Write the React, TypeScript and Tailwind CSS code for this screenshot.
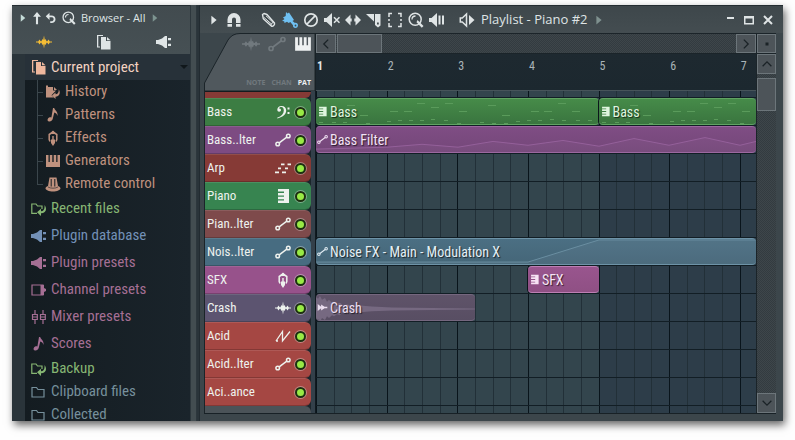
import { useState } from 'react'
import type { ReactNode } from 'react'

function cx(...classes: Array<string | false | null | undefined>) {
  return classes.filter(Boolean).join(' ')
}

type IconName =
  | 'wave' | 'pages' | 'plug' | 'history' | 'note' | 'effects' | 'keys' | 'knob' | 'folderReturn'
  | 'channel' | 'mixer' | 'folder' | 'automation' | 'clef' | 'steps' | 'keysSide' | 'zigzag'
  | 'arrowUp' | 'undo' | 'search' | 'triangle' | 'magnet' | 'pencil' | 'brush' | 'forbid' | 'mute'
  | 'slip' | 'slice' | 'select' | 'scrub' | 'speaker' | 'minimize' | 'maximize' | 'close'
  | 'chevronLeft' | 'chevronRight' | 'chevronUp' | 'chevronDown' | 'dot' | 'clipAudio'

const stroke = { fill: 'none', stroke: 'currentColor' }

const icons: Record<IconName, ReactNode> = {
  wave: <path d="M0 7.400h2.200L3.500 5.500l1.200 1.700h.8L6.300 5l.9 1L8 1.500 8.800 6l.9-1 .8 2.200h.8l1.200-1.700 1.300 1.900H16v1.200h-2.200l-1.300 1.900-1.200-1.700h-.8L9.700 11l-.9-1L8 14.500 7.200 10l-.9 1-.8-2.200h-.8l-1.200 1.700-1.300-1.900H0z" />,
  pages: (
    <>
      <path d="M1 1h6v1H2.300v10.500H4v1H1z" />
      <path d="M5 3h5v4h4.500v8.500H5z" />
      <path d="M11 3l3.500 3.200H11z" />
    </>
  ),
  plug: (
    <>
      <path d="M0 6h2l4-1.500L9 2h2v12H9l-3-2.500L2 10H0z" />
      <path d="M12 4h3v2.200h-3zM12 9.800h3V12h-3z" />
    </>
  ),
  history: (
    <>
      <path d="M1 1.500h2V3h5v3.500h3l-4.500 4.700L9 13.500H1z" />
      <path d="M9 3l3 3H9z" />
      <path d="M13.800 5.500c2.200 3.500.5 7-3.300 7.200V15L7 11.500 10.500 8.500v1.800c2.300 0 3.300-2 3.300-4.800z" />
    </>
  ),
  note: <path d="M8 1h1.200c.3 2.200 4 3.200 3.300 8-.7-2-1.700-3-3.200-3.400L7.700 12c-.5 1.700-2 2.700-3.500 2.500-1.600-.2-2.100-1.600-1.300-2.800.8-1.100 2.300-1.600 3.500-1.200z" />,
  effects: (
    <>
      <path {...stroke} strokeWidth="1.500" d="M5 11.500L4.200 9.500v-5L8 2l3.800 2.500v5l-.8 2" />
      <path d="M8 .5l3 3H5zM7.300 6h1.400v3.500H10V13l-2 3-2-3V9.500h1.300z" />
    </>
  ),
  keys: <path d="M1 2h2.500v7h1.300V2h2.500v7h1.400V2h2.500v7h1.300V2H15v12H1z" />,
  knob: (
    <>
      <path d="M4.500 1.500h7L13 10c1.500.5 2.500 1.500 2.500 2.500C15.500 14 12 15.500 8 15.500S.5 14 .5 12.500c0-1 1-2 2.500-2.500z" />
      <path d="M6.200 3v7.500M9.800 3v7.500" fill="none" stroke="#151d23" strokeWidth="1" />
      <path d="M3 11c2.500 1.600 7.500 1.600 10 0" fill="none" stroke="#151d23" strokeWidth=".6" />
    </>
  ),
  folderReturn: (
    <>
      <path {...stroke} strokeWidth="1.200" d="M6 12.400H.8V3H5l1.500 2H11v3" />
      <path d="M13.500 4c3 4 1.300 8-3.500 8.200V15l-4-3.700L10 7.800v2.400c2.700 0 4-2.700 3.500-6.200z" />
    </>
  ),
  channel: (
    <>
      <path {...stroke} strokeWidth="1.200" d="M1 3h11v10H1z" />
      <path d="M9.500 3H13v10H9.500zM13 6l2 1v2l-2 1z" />
    </>
  ),
  mixer: <path {...stroke} strokeWidth="1.200" d="M4 1v4.500M4 10.500V15M12 1v4.500M12 10.500V15M1.500 5.500h4.800v5H1.500zM9.500 5.500h4.800v5H9.500zM2 8h4M10 8h4" />,
  folder: <path {...stroke} strokeWidth="1.200" d="M1 13V3.500h4.500l1.500 2h6V13z" />,
  automation: (
    <g {...stroke} strokeWidth="1.500">
      <circle cx="2.700" cy="12" r="1.800" />
      <circle cx="13.300" cy="4" r="1.800" />
      <path d="M4.200 10.900l7.600-5.800" />
    </g>
  ),
  clef: (
    <>
      <path d="M2.300 5.800C2.300 3.500 4 2 6.500 2c3 0 4.700 1.800 4.700 4.500 0 3.700-3 6.300-8.700 8l-.4-.7c4.500-1.700 6.700-4 6.700-7.300C8.800 4.300 8 3 6.300 3 5 3 4 3.600 3.800 4.600c1.300-.3 2.200.4 2.200 1.500s-.8 1.700-1.800 1.700c-1.200 0-1.900-.8-1.900-2z" />
      <path d="M12.500 3.500h2v2h-2zM12.500 8h2v2h-2z" />
    </>
  ),
  steps: <path d="M0 11.500h4v1.700H0zM7 11.500h4v1.700H7zM3 7.500h3v1.700H3zM10 7.500h3v1.700h-3zM6 3.500h3.500v1.700H6zM12.500 3.500H16v1.700h-3.500z" />,
  keysSide: <path d="M3 1h11v14H3v-2.500h6v-1.300H3V8.700h6V7.400H3V4.900h6V3.600H3z" />,
  zigzag: <path {...stroke} strokeWidth="1.300" d="M1 13L7.500 3.500v9.500L15 3.500M1 13h2" />,
  arrowUp: <path d="M8 1l4.500 5.500H9.200V15H6.800V6.500H3.500z" />,
  undo: <path d="M6 1v3.500h2.500c3.500 0 5.500 2 5.500 5s-2 5-5.500 5H7v-2.300h1.300c2 0 3.200-1 3.200-2.700S10.300 7 8.500 7H6v3.500L1 5.800z" />,
  search: (
    <>
      <circle {...stroke} strokeWidth="1.500" cx="7.200" cy="7.200" r="6" />
      <path {...stroke} strokeWidth="1.300" d="M4 7.500C4 5.200 5.200 4 7.500 4" />
      <path d="M9.500 8l6 6-1.700 1.700-5.300-5.500z" />
    </>
  ),
  triangle: <path d="M5 3l6 5-6 5z" />,
  magnet: (
    <>
      <path d="M1.500 11V7.500a6.500 6.500 0 0113 0V11H10V7.500a2 2 0 00-4 0V11z" />
      <path d="M1.500 12H6v2.800H1.500zM10 12h4.500v2.800H10z" />
    </>
  ),
  pencil: (
    <>
      <path {...stroke} strokeWidth="1.400" strokeLinejoin="round" d="M1.500 2.500l.8 4.200 8 7.300c1.700.7 3.700-1.200 3.200-3L6 2.500 3 1.500z" />
      <path {...stroke} strokeWidth="1" d="M3 5.500l8 7M5 3.800l7.500 7M9.300 13l3.700-3.500" />
    </>
  ),
  brush: (
    <>
      <path d="M4 0l1.500 1.500L7 .5l5 7.500-1.500 1L13 11c1.500-.5 3 .5 3 2.300 0 1.500-1 2.700-2.500 2.700-1.700 0-2.700-1-2.500-2.700L8.300 10l-1.600 1L5 9.800 2.500 11l-.3-1.700L0 9l2.500-2L1 5.500 3.700 4z" />
      <circle cx="13.500" cy="13.500" r=".9" fill="#414a4e" />
    </>
  ),
  forbid: (
    <g {...stroke} strokeWidth="1.700">
      <circle cx="8" cy="8" r="6.200" />
      <path d="M3.700 12.300l8.600-8.600" />
    </g>
  ),
  mute: (
    <>
      <path d="M0 6h2.500L8 1v14l-5.500-5H0z" />
      <path {...stroke} strokeWidth="1.600" d="M10 5.200l5.500 5.600M15.500 5.200L10 10.800" />
    </>
  ),
  slip: <path d="M5.500 2.500v4h1.200v3H5.500v4L0 8zM10.500 2.500v4H9.300v3h1.200v4L16 8z" />,
  slice: (
    <>
      <path d="M0 2h8v7.500z" />
      <path d="M9 2h5.500v11.500L12 15.500 9 13z" />
      <path d="M11 10.500h1.800v2H11z" fill="#414a4e" />
    </>
  ),
  select: <path {...stroke} strokeWidth="1.500" d="M5 1.500H2V5M11 1.500h3V5M5 14.500H2V11M11 14.500h3V11M2 7v2M14 7v2" />,
  scrub: (
    <>
      <path d="M0 6h2.500L8 1v14l-5.500-5H0z" />
      <path d="M9.500 3.500h2v9h-2zM13 3.500h2v9h-2z" />
    </>
  ),
  speaker: (
    <>
      <path {...stroke} strokeWidth="1.500" d="M1.300 6h2L7.500 2v12L3.300 10h-2z" />
      <path d="M10 3l5.500 5L10 13z" />
    </>
  ),
  minimize: <path d="M5 5h7v2H5z" />,
  maximize: <path d="M3 4h10v8.500H3zM4.500 6.500V11h7V6.500z" fillRule="evenodd" />,
  close: <path {...stroke} strokeWidth="2" d="M4 4l8 8M12 4l-8 8" />,
  chevronLeft: <path {...stroke} strokeWidth="1.500" d="M10.500 3L5.500 8l5 5" />,
  chevronRight: <path {...stroke} strokeWidth="1.500" d="M5.500 3l5 5-5 5" />,
  chevronUp: <path {...stroke} strokeWidth="1.500" d="M3 10.500l5-5 5 5" />,
  chevronDown: <path {...stroke} strokeWidth="1.500" d="M3 5.500l5 5 5-5" />,
  dot: <path d="M6.500 6.500h3v3h-3z" />,
  clipAudio: <path d="M1 3l5 4V3.500L11 7h4v2h-4l-5 3.500V9l-5 4z" />,
}

function Icon({ name, className = 'size-4' }: { name: IconName; className?: string }) {
  return (
    <svg viewBox="0 0 16 16" fill="currentColor" aria-hidden="true" className={cx('shrink-0', className)}>
      {icons[name]}
    </svg>
  )
}

function IconButton({ name, label, className, size = 'size-4' }: { name: IconName; label: string; className?: string; size?: string }) {
  return (
    <button type="button" aria-label={label} className={cx('flex shrink-0 items-center justify-center', className)}>
      <Icon name={name} className={size} />
    </button>
  )
}

type TreeItem = { label: string; icon: IconName; color: string; compact?: boolean }

const projectItems: TreeItem[] = [
  { label: 'History', icon: 'history', color: 'text-[#bf917e]' },
  { label: 'Patterns', icon: 'note', color: 'text-[#bf917e]' },
  { label: 'Effects', icon: 'effects', color: 'text-[#bf917e]' },
  { label: 'Generators', icon: 'keys', color: 'text-[#bf917e]' },
  { label: 'Remote control', icon: 'knob', color: 'text-[#bf917e]' },
]

const folders: TreeItem[] = [
  { label: 'Recent files', icon: 'folderReturn', color: 'text-[#86b673]' },
  { label: 'Plugin database', icon: 'plug', color: 'text-[#7391b7]' },
  { label: 'Plugin presets', icon: 'plug', color: 'text-[#a56f94]' },
  { label: 'Channel presets', icon: 'channel', color: 'text-[#a56f94]' },
  { label: 'Mixer presets', icon: 'mixer', color: 'text-[#a56f94]' },
  { label: 'Scores', icon: 'note', color: 'text-[#a56f94]' },
  { label: 'Backup', icon: 'folderReturn', color: 'text-[#86b673]', compact: true },
  { label: 'Clipboard files', icon: 'folder', color: 'text-[#76909c]', compact: true },
  { label: 'Collected', icon: 'folder', color: 'text-[#76909c]', compact: true },
]

function Browser() {
  return (
    <aside className="flex w-[178px] shrink-0 flex-col bg-[#2a343a]">
      <header className="border-t border-[#242d32] bg-gradient-to-b from-[#424b4f] to-[#465054] text-[#dfe5e6]">
        <div className="flex h-6 items-center pl-[3px]">
          <IconButton name="triangle" label="Browser menu" size="size-3" className="w-4 text-[#c5dcd8]" />
          <IconButton name="arrowUp" label="Up" size="size-3.5" className="w-3" />
          <IconButton name="undo" label="Back" size="size-3" className="w-4" />
          <IconButton name="search" label="Search" size="size-3.5" className="w-5" />
          <h2 className="pl-0.5 font-['Open_Sans',sans-serif] text-[11px] font-medium">Browser - All</h2>
          <Icon name="triangle" className="ml-1 size-3 text-[#7d9490]" />
        </div>
        <div className="flex h-6 items-center justify-between pl-6 pr-[18px]">
          <IconButton name="wave" label="Sounds" className="text-[#f5bd35]" />
          <IconButton name="pages" label="Project files" />
          <IconButton name="plug" label="Plugins" />
        </div>
      </header>

      <nav className="ml-[13px] min-h-0 flex-1 overflow-hidden bg-gradient-to-r from-[#141c21] to-[#1a242b] font-['Roboto_Condensed','Roboto',sans-serif] text-[15px] leading-none">
        <button type="button" className="flex h-[26px] w-full items-center gap-1 bg-[#273139] pl-1.5 pr-0.5 text-[#f3d3c2]">
          <Icon name="pages" className="size-4 text-[#eeb79d]" />
          Current project
          <svg viewBox="0 0 8 4" className="ml-auto h-1 w-2 fill-[#10171b]" aria-hidden="true">
            <path d="M0 0h8L4 4z" />
          </svg>
        </button>
        <ul>
          {projectItems.map((item) => (
            <li
              key={item.label}
              className="relative pl-5 before:absolute before:left-3 before:top-0 before:h-full before:w-px before:bg-[#3b464c] after:absolute after:left-3 after:top-1/2 after:h-px after:w-1.5 after:bg-[#3b464c] last:before:h-1/2"
            >
              <button type="button" className={cx('flex h-[23px] items-center gap-1', item.color)}>
                <Icon name={item.icon} />
                {item.label}
              </button>
            </li>
          ))}
        </ul>
        <ul>
          {folders.map((item) => (
            <li key={item.label} className="pl-1.5">
              <button
                type="button"
                className={cx('flex items-center gap-1', item.compact ? 'h-[23px]' : 'h-[27px]', item.color)}
              >
                <Icon name={item.icon} />
                {item.label}
              </button>
            </li>
          ))}
        </ul>
      </nav>
    </aside>
  )
}

const tools: { name: IconName; label: string; color?: string }[] = [
  { name: 'pencil', label: 'Draw' },
  { name: 'brush', label: 'Paint', color: 'text-[#6fc0f2]' },
  { name: 'forbid', label: 'Delete' },
  { name: 'mute', label: 'Mute' },
  { name: 'slip', label: 'Slip' },
  { name: 'slice', label: 'Slice' },
  { name: 'select', label: 'Select' },
  { name: 'search', label: 'Zoom' },
  { name: 'scrub', label: 'Playback' },
]

function TitleBar() {
  return (
    <header className="flex h-7 shrink-0 items-center border-t border-[#242d32] bg-gradient-to-b from-[#3e474b] to-[#444d51] pl-1 pt-px text-[#dfe4e5]">
      <IconButton name="triangle" label="Playlist menu" size="size-3.5" className="w-5" />
      <IconButton name="magnet" label="Snap" className="w-5" />
      <div className="ml-3.5 flex">
        {tools.map((tool) => (
          <IconButton key={tool.name} name={tool.name} label={tool.label} className={cx('w-[21px]', tool.color)} />
        ))}
      </div>
      <Icon name="speaker" className="ml-3 size-4" />
      <h1 className="ml-1.5 whitespace-nowrap font-['Open_Sans',sans-serif] text-[13px] font-medium">Playlist - Piano #2</h1>
      <Icon name="triangle" className="ml-1 size-3.5 text-[#7f918f]" />
      <div className="ml-auto flex pr-1.5">
        <IconButton name="minimize" label="Minimize" className="w-[19px]" />
        <IconButton name="maximize" label="Maximize" className="w-[19px]" />
        <IconButton name="close" label="Close" className="w-[19px]" />
      </div>
    </header>
  )
}

type Track = { label: string; icon?: IconName; color: string }

const tracks: Track[] = [
  { label: 'Bass', icon: 'clef', color: 'bg-[#3c7d43]' },
  { label: 'Bass..lter', icon: 'automation', color: 'bg-[#7d4b82]' },
  { label: 'Arp', icon: 'steps', color: 'bg-[#863a36]' },
  { label: 'Piano', icon: 'keysSide', color: 'bg-[#378450]' },
  { label: 'Pian..lter', icon: 'automation', color: 'bg-[#7e4a4b]' },
  { label: 'Nois..lter', icon: 'automation', color: 'bg-[#476c81]' },
  { label: 'SFX', icon: 'effects', color: 'bg-[#97528b]' },
  { label: 'Crash', icon: 'wave', color: 'bg-[#5c5470]' },
  { label: 'Acid', icon: 'zigzag', color: 'bg-[#a54743]' },
  { label: 'Acid..lter', icon: 'automation', color: 'bg-[#a54743]' },
  { label: 'Aci..ance', color: 'bg-[#a54743]' },
]

function TrackList() {
  const [muted, setMuted] = useState<string[]>([])

  function toggle(label: string) {
    setMuted((prev) => (prev.includes(label) ? prev.filter((l) => l !== label) : [...prev, label]))
  }

  return (
    <div className="overflow-hidden border-r border-[#101a20] bg-[#33404a] font-['Roboto_Condensed','Roboto',sans-serif] text-[13px] text-[#eef2ee]">
      <div className="mr-1 border-l border-[#1b2429] bg-[#1b262c]">
        <div className="h-[7px] rounded-br-md border-t border-[#141c20] bg-[#863a36]" />
        {tracks.map((track) => (
          <label
            key={track.label}
            className={cx(
              'flex h-7 items-center gap-1 rounded-r-md border-y border-t-white/10 border-b-black/20 pl-0.5 pr-[5px]',
              track.color
            )}
          >
            <span className="flex-1">{track.label}</span>
            {track.icon && <Icon name={track.icon} />}
            <input
              type="checkbox"
              checked={!muted.includes(track.label)}
              onChange={() => toggle(track.label)}
              className="size-[11px] appearance-none rounded-full border-2 border-[#1c3010] bg-[#3a4a34] ring-1 ring-white/35 checked:bg-[#98ea45]"
            />
          </label>
        ))}
        <div className="h-7 rounded-tr-md bg-[#4b5358]" />
      </div>
    </div>
  )
}

// Number of bars that fit in the visible part of the timeline
const VISIBLE_BARS = 6.23

function barPercent(bars: number) {
  return `${(bars / VISIBLE_BARS) * 100}%`
}

const beats = Array.from({ length: 25 }, (_, i) => i)
const rulerBars = [1, 2, 3, 4, 5, 6, 7]

function Ruler() {
  return (
    <div className="relative h-[37px] overflow-hidden border-b border-[#47545a] bg-gradient-to-b from-[#1e2930] to-[#1c282f] font-['Roboto_Condensed','Roboto',sans-serif] text-xs text-[#aab4b8]">
      {rulerBars.map((bar) => (
        <span
          key={bar}
          className={cx('absolute top-1 pl-px leading-4', bar === 1 && 'font-bold text-[#dfe4e6]')}
          style={{ left: barPercent(bar - 1) }}
        >
          {bar}
        </span>
      ))}
    </div>
  )
}

function GridLines() {
  return (
    <svg className="absolute inset-0 size-full" shapeRendering="crispEdges" aria-hidden="true">
      <defs>
        <pattern id="rows" width="28" height="28" y="6" patternUnits="userSpaceOnUse">
          <rect width="28" height="1" fill="#121e25" />
        </pattern>
      </defs>
      <rect width="100%" height="100%" fill="#33454d" />
      <rect x={barPercent(4)} width="100%" height="100%" fill="#2d3d49" />
      {beats.map((beat) => (
        <rect
          key={beat}
          x={barPercent(beat / 4)}
          width={1}
          height="100%"
          fill={beat % 4 === 0 ? '#09141b' : '#223038'}
        />
      ))}
      <rect width="100%" height="100%" fill="url(#rows)" />
    </svg>
  )
}

// [start in px from the clip's left edge, height inside the clip, length]
const melody = [
  [31, 6, 8], [44, 16, 8], [74, 12, 8], [88, 12, 8], [101, 4, 8], [115, 8, 8], [129, 4, 8], [143, 12, 8],
  [172, 6, 8], [186, 16, 8], [215, 12, 8], [228, 12, 8], [242, 4, 8], [256, 12, 8],
  [3, 23, 4], [16, 23, 4], [27, 23, 4], [39, 25, 4], [50, 24, 4], [62, 25, 4], [71, 22, 4], [82, 21, 4],
  [93, 21, 4], [104, 21, 4], [115, 20, 4], [128, 21, 4], [141, 24, 4], [152, 25, 4], [164, 23, 4],
  [176, 24, 4], [188, 24, 4], [200, 22, 4], [211, 21, 4], [222, 21, 4], [234, 20, 4], [246, 21, 4], [260, 21, 4], [272, 21, 4],
]

function MelodyNotes() {
  return (
    <svg width="283" height="26" className="absolute left-0 top-0 fill-[#5a9b5b]" shapeRendering="crispEdges" aria-hidden="true">
      {melody.map(([x, y, w]) => (
        <rect key={`${x}-${y}`} x={x} y={y} width={w} height="1" />
      ))}
    </svg>
  )
}

function Envelope({ line, fill }: { line: string; fill: string }) {
  return (
    <svg viewBox="0 0 440 26" preserveAspectRatio="none" className="absolute inset-0 size-full" aria-hidden="true">
      <path d={`${line}V26H0Z`} fill={fill} />
      <path d={line} fill="none" stroke="currentColor" vectorEffect="non-scaling-stroke" />
    </svg>
  )
}

type Clip = { row: number; start: number; length: number; label: string; icon: IconName; color: string; art?: ReactNode }

const clips: Clip[] = [
  { row: 0, start: 0, length: 4, label: 'Bass', icon: 'keysSide', color: 'border-[#60a363] from-[#468b49] to-[#3a753f] text-[#dff5df]', art: <MelodyNotes /> },
  { row: 0, start: 4, length: 2.23, label: 'Bass', icon: 'keysSide', color: 'border-[#60a363] from-[#468b49] to-[#3a753f] text-[#dff5df]', art: <MelodyNotes /> },
  {
    row: 1,
    start: 0,
    length: 6.23,
    label: 'Bass Filter',
    icon: 'automation',
    color: 'border-[#9b68a0] from-[#7f4d84] to-[#744779] text-[#f2e2f4]',
    art: (
      <div className="absolute inset-0 text-[#94609a]">
        <Envelope
          line="M0 23L71 21L106 18L142 21L177 15L212 19L247 14L283 20L318 12L353 19L389 11L424 19L440 15"
          fill="#ffffff08"
        />
      </div>
    ),
  },
  {
    row: 5,
    start: 0,
    length: 6.23,
    label: 'Noise FX - Main - Modulation X',
    icon: 'automation',
    color: 'border-[#6e93a7] from-[#4b6f83] to-[#456678] text-[#e4eff5]',
    art: (
      <div className="absolute inset-0 text-[#6a8ea1]">
        <Envelope line="M0 24H212L283 1H440" fill="#ffffff0a" />
      </div>
    ),
  },
  { row: 6, start: 3, length: 1, label: 'SFX', icon: 'keysSide', color: 'border-[#bd7fb4] from-[#99558e] to-[#8f5084] text-[#f7e3f4]' },
  {
    row: 7,
    start: 0,
    length: 2.25,
    label: 'Crash',
    icon: 'clipAudio',
    color: 'border-[#75677f] from-[#5f5369] to-[#584e63] text-[#ecdff0]',
    art: (
      <svg viewBox="0 0 159 26" preserveAspectRatio="none" className="absolute inset-0 size-full fill-[#766981]" aria-hidden="true">
        <path d="M0 2l2 2 2-3 2 4 3-2 2 4 2-2 3 3 2-1 3 2 3-1 3 3 4-1 5 1 8 0 12 1 20 1 40 .5 43 .5v1l-43 .5-40 .5-20 1-12 1-8 0-5 1-4-1-3 3-3-1-3 2-2-1-3 3-2-2-2 4-3-2-2 4-2-3-2 2z" />
      </svg>
    ),
  },
]

const rowTop = ['top-[7px]', 'top-[35px]', 'top-[63px]', 'top-[91px]', 'top-[119px]', 'top-[147px]', 'top-[175px]', 'top-[203px]']

function Arrangement() {
  return (
    <div className="relative overflow-hidden">
      <GridLines />
      {clips.map((clip) => (
        <div
          key={`${clip.row}-${clip.start}`}
          className={cx(
            "absolute h-[27px] overflow-hidden rounded-sm border-y bg-gradient-to-b font-['Roboto_Condensed','Roboto',sans-serif] text-sm shadow-[-1px_0_0_#0b161b]",
            rowTop[clip.row],
            clip.color
          )}
          style={{ left: barPercent(clip.start), width: barPercent(clip.length) }}
        >
          {clip.art}
          <div className="relative flex h-full items-center gap-0.5 whitespace-nowrap pl-px [text-shadow:1px_1px_1px_#000a]">
            <Icon name={clip.icon} className="size-[11px]" />
            {clip.label}
          </div>
        </div>
      ))}
    </div>
  )
}

const scrollButton = 'border border-[#6c757a] bg-[#4d5459] text-[#1b2327]'
const scrollTrack = 'bg-[repeating-conic-gradient(#333b40_0_25%,#3e464a_0_50%)] bg-[length:2px_2px]'

function Playlist() {
  return (
    <section className="flex min-w-0 flex-1 flex-col border-l border-[#222b31] bg-[#3c464b]">
      <TitleBar />
      <div className="mb-[7px] ml-1 mr-[7px] grid min-h-0 flex-1 grid-cols-[112px_minmax(0,1fr)_20px] grid-rows-[58px_minmax(0,1fr)] border-b border-[#182126]">
        <div className="relative flex flex-col justify-between border-r border-[#182126] pl-9 pr-1 pt-0.5 text-[#71797e]">
          <svg viewBox="0 0 111 58" preserveAspectRatio="none" className="absolute inset-0 size-full" aria-hidden="true">
            <path d="M.5 58V50L24 7Q28 .5 36 .5H111V58z" fill="#50585d" stroke="#1b2429" />
          </svg>
          <div className="relative flex items-center gap-2 pl-0.5">
            <IconButton name="wave" label="Audio clips" size="size-[18px]" />
            <IconButton name="automation" label="Automation clips" size="size-[18px]" />
            <IconButton name="keys" label="Pattern clips" size="size-[18px]" className="text-[#eef1f2]" />
          </div>
          <div className="relative flex justify-end gap-1.5 font-['Open_Sans',sans-serif] text-[7px] font-bold leading-4">
            <span>NOTE</span>
            <span>CHAN</span>
            <span className="text-[#eef1f2]">PAT</span>
          </div>
        </div>

        <div className="flex min-w-0 flex-col">
          <div className={cx('flex h-[21px] gap-px border-y border-[#1b2429]', scrollTrack)}>
            <IconButton name="chevronLeft" label="Scroll left" size="size-3.5" className={cx('w-5', scrollButton)} />
            <div className={cx('w-[45px]', scrollButton)} />
            <IconButton name="chevronRight" label="Scroll right" size="size-3.5" className={cx('ml-auto w-5', scrollButton)} />
          </div>
          <Ruler />
        </div>

        <div className="row-span-2 flex min-h-0 flex-col border-l border-[#1b2429]">
          <div className="h-[21px] shrink-0 border-y border-[#1b2429]">
            <IconButton name="dot" label="Fit view" className={cx('size-full', scrollButton)} />
          </div>
          <div className={cx('flex flex-1 flex-col', scrollTrack)}>
            <IconButton name="chevronUp" label="Scroll up" size="size-3.5" className={cx('h-5', scrollButton)} />
            <div className={cx('mt-1 h-[33px]', scrollButton)} />
            <IconButton name="chevronDown" label="Scroll down" size="size-3.5" className={cx('mt-auto h-5', scrollButton)} />
          </div>
        </div>

        <TrackList />
        <Arrangement />
      </div>
    </section>
  )
}

export default function App() {
  return (
    <div className="flex h-dvh bg-[#fefefe] px-3 pb-[19px] pt-[5px]">
      <main className="flex min-w-0 flex-1 bg-[#2a343a] shadow-[2px_4px_8px_rgba(0,0,0,0.6)]">
        <Browser />
        <div className="mr-0.5 w-[7px] shrink-0 border-x border-[#2d373d] bg-[#434d51]" />
        <Playlist />
      </main>
    </div>
  )
}
